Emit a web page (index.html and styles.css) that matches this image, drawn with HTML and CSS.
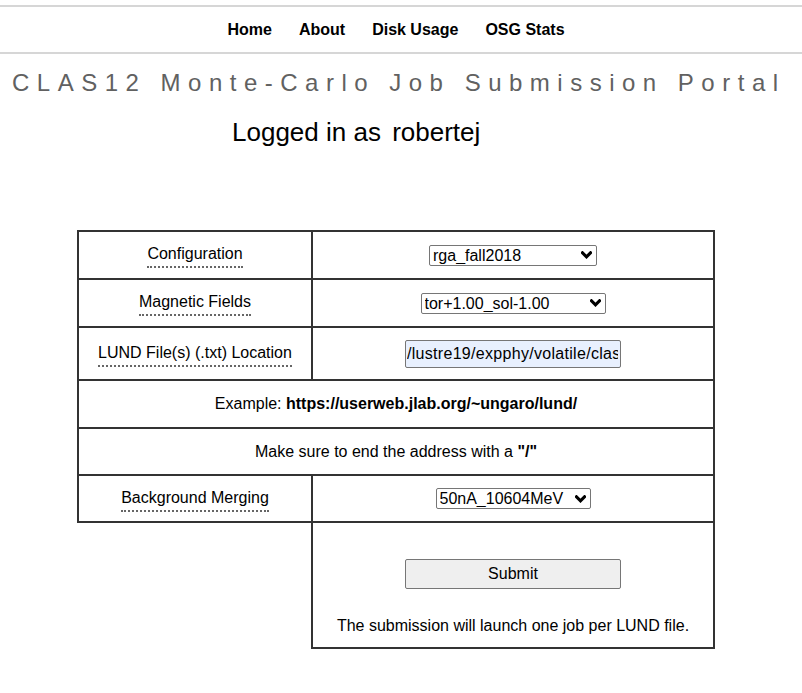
FILE: index.html
```html
<!DOCTYPE html>
<html>
<head>
<meta charset="utf-8">
<link rel="stylesheet" href="styles.css">
</head>
<body>
<nav class="topnav">
  <ul class="navlist">
    <li><a href="#">Home</a></li>
    <li><a href="#">About</a></li>
    <li><a href="#">Disk Usage</a></li>
    <li><a href="#">OSG Stats</a></li>
  </ul>
</nav>
<div class="page">
  <h1 class="title">CLAS12 Monte-Carlo Job Submission Portal</h1>
  <h2 class="login">Logged in as <span class="user">robertej</span></h2>
  <form class="form">
    <table class="sub-table">
      <tr class="r1">
        <td class="label"><span class="lbl">Configuration</span></td>
        <td class="field">
          <select class="sel sel-config">
            <option>rga_fall2018</option>
          </select>
        </td>
      </tr>
      <tr class="r2">
        <td class="label"><span class="lbl">Magnetic Fields</span></td>
        <td class="field">
          <select class="sel sel-field">
            <option>tor+1.00_sol-1.00</option>
          </select>
        </td>
      </tr>
      <tr class="r3">
        <td class="label"><span class="lbl">LUND File(s) (.txt) Location</span></td>
        <td class="field">
          <input class="loc" type="text" value="/lustre19/expphy/volatile/clas12/robertej/">
        </td>
      </tr>
      <tr class="r4">
        <td class="wide" colspan="2">Example: <b>https://userweb.jlab.org/~ungaro/lund/</b></td>
      </tr>
      <tr class="r5">
        <td class="wide" colspan="2">Make sure to end the address with a <b>"/"</b></td>
      </tr>
      <tr class="r6">
        <td class="label"><span class="lbl">Background Merging</span></td>
        <td class="field">
          <select class="sel sel-bg">
            <option>50nA_10604MeV</option>
          </select>
        </td>
      </tr>
      <tr class="r7">
        <td class="empty"></td>
        <td class="submit-cell">
          <div class="submit-wrap">
            <button type="button" class="submit">Submit</button>
            <p class="note">The submission will launch one job per LUND file.</p>
          </div>
        </td>
      </tr>
    </table>
  </form>
</div>
</body>
</html>
```

FILE: styles.css
```css
html, body {
  margin: 0;
  padding: 0;
  background: #fff;
}
body {
  font-family: "Liberation Sans", Arial, sans-serif;
  color: #000;
}
.topnav {
  margin-top: 5px;
  border-top: 2px solid #d6d6d6;
  border-bottom: 2px solid #d6d6d6;
  height: 45px;
  display: flex;
  align-items: center;
  justify-content: center;
  padding-right: 10px;
}
.navlist {
  list-style: none;
  margin: 0;
  padding: 0;
  display: flex;
  gap: 27px;
}
.navlist a {
  color: #000;
  text-decoration: none;
  font-weight: bold;
  font-size: 16px;
}
.page {
  padding-right: 10px;
}
.title {
  margin: 14px 0 0 12px;
  font-family: "Liberation Sans", Arial, sans-serif;
  font-weight: normal;
  font-size: 24px;
  letter-spacing: 7.5px;
  color: #616161;
  white-space: nowrap;
  line-height: 30px;
}
.login {
  margin: 19px 0 0 232px;
  font-family: "Liberation Sans", Arial, sans-serif;
  font-weight: normal;
  font-size: 26px;
  line-height: 30px;
  color: #000;
}
.user {
  margin-left: 4px;
}
.form {
  margin: 83px 0 0 0;
}
.sub-table {
  margin: 0 auto;
  border-collapse: collapse;
  width: 638px;
  font-size: 16px;
}
.sub-table td {
  border: 2px solid #333;
  text-align: center;
  vertical-align: middle;
  padding: 0;
}
.sub-table td.label {
  width: 232px;
}
.sub-table td.empty {
  border: none;
}
.r1 td { height: 46px; }
.r2 td { height: 46px; }
.r3 td { height: 51px; }
.r4 td { height: 46px; }
.r5 td { height: 45px; }
.r6 td { height: 45px; }
.r7 td { height: 124px; }
.lbl {
  display: inline-block;
  margin-top: 3px;
  padding-bottom: 3px;
  border-bottom: 2px dotted #666;
  line-height: 18px;
}
.sel {
  -webkit-appearance: none;
  appearance: none;
  font-family: "Liberation Sans", Arial, sans-serif;
  font-size: 16px;
  height: 21px;
  border: 1px solid #767676;
  border-radius: 2px;
  background-color: #fff;
  background-image: url("data:image/svg+xml;utf8,<svg xmlns='http://www.w3.org/2000/svg' width='12' height='8' viewBox='0 0 12 8'><path d='M1.6 1.6 L6 6 L10.4 1.6' fill='none' stroke='black' stroke-width='3.4' stroke-linecap='square'/></svg>");
  background-repeat: no-repeat;
  background-position: right 4px center;
  background-size: 11px 8px;
  color: #000;
  padding: 0 18px 0 3px;
  text-align: left;
}
.sel-config { width: 168px; }
.sel-field { width: 185px; }
.sel-bg { width: 155px; }
.loc {
  font-family: "Liberation Sans", Arial, sans-serif;
  font-size: 16px;
  letter-spacing: 0.3px;
  width: 216px;
  height: 28px;
  box-sizing: border-box;
  padding: 1px 2px 1px 1px;
  border: 1px solid #767676;
  border-radius: 2px;
  background: #e8f0fe;
  color: #000;
}
.submit-cell {
  vertical-align: top !important;
}
.submit-wrap {
  padding-top: 36px;
  display: flex;
  flex-direction: column;
  align-items: center;
}
.submit {
  font-family: "Liberation Sans", Arial, sans-serif;
  font-size: 16px;
  width: 216px;
  height: 30px;
  background: #efefef;
  border: 1px solid #767676;
  border-radius: 2px;
  color: #000;
}
.note {
  margin: 28px 0 0 0;
  line-height: 18px;
}
```
